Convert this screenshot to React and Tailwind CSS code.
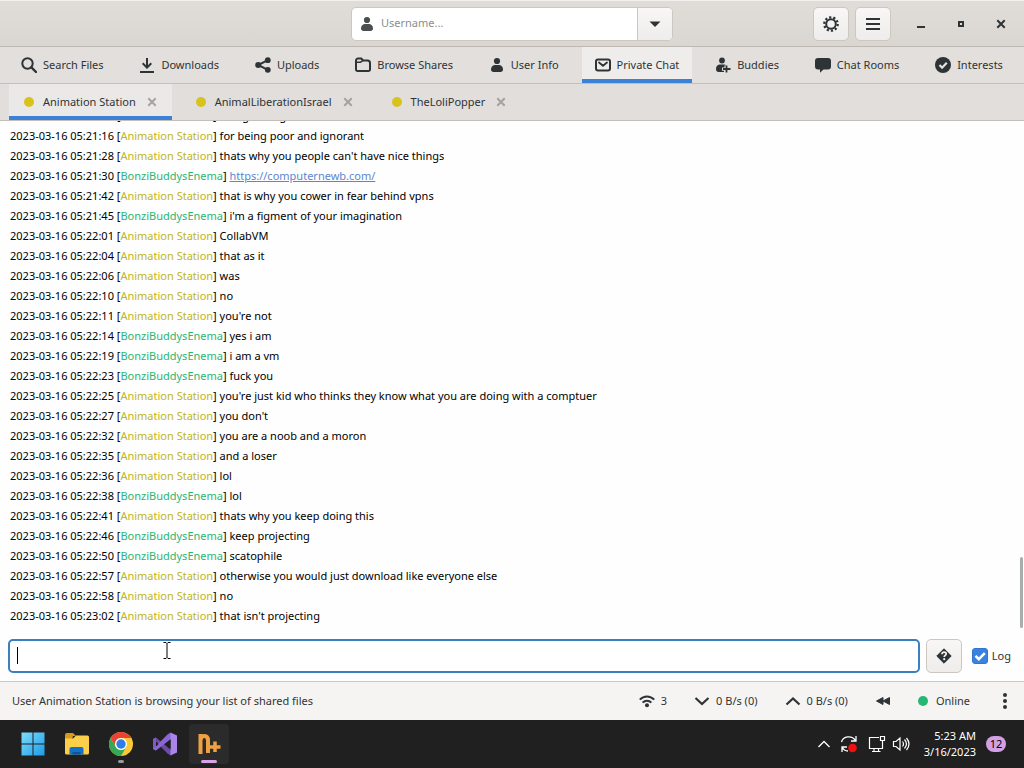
import React, { useState } from 'react';

const icons = {
  search: (
    <>
      <circle cx="6.5" cy="6.5" r="5.2" fill="none" stroke="currentColor" strokeWidth="2" />
      <path d="M10.4 10.4 15 15" stroke="currentColor" strokeWidth="2.4" strokeLinecap="round" />
    </>
  ),
  download: (
    <path d="M7 1h2v7.2l2.6-2.6L13 7l-5 5-5-5 1.4-1.4L7 8.2zM1 14h14v2H1z" fill="currentColor" />
  ),
  share: (
    <>
      <circle cx="3.2" cy="8" r="3" fill="currentColor" />
      <circle cx="12.8" cy="3.2" r="2.9" fill="currentColor" />
      <circle cx="12.8" cy="12.8" r="2.9" fill="currentColor" />
      <path d="M12.8 3.2 3.2 8l9.6 4.8" fill="none" stroke="currentColor" strokeWidth="2" />
    </>
  ),
  folder: (
    <>
      <path d="M1 12.5v-9A2 2 0 0 1 3 1.500h3.300L8 3.500h4.500A2.500 2.500 0 0 1 15 6v6.500a1.500 1.500 0 0 1-1.500 1.500h-11A1.500 1.500 0 0 1 1 12.500z" fill="none" stroke="currentColor" strokeWidth="2" />
      <path d="M1 5.200h4.500L8 3.500" fill="none" stroke="currentColor" strokeWidth="1.500" />
    </>
  ),
  user: (
    <>
      <circle cx="8" cy="4" r="3.100" fill="currentColor" />
      <path d="M2 12.500C2 9.500 4 8 6 8h4c2 0 4 1.500 4 4.500 0 1.500-1 2.500-2.500 2.500h-7C3 15 2 14 2 12.500z" fill="currentColor" />
    </>
  ),
  mail: (
    <>
      <rect x="1" y="2.500" width="14" height="11" rx="2" fill="none" stroke="currentColor" strokeWidth="2" />
      <path d="m4 5.500 4 3.300 4-3.300" fill="none" stroke="currentColor" strokeWidth="1.800" strokeLinecap="round" />
    </>
  ),
  buddy: (
    <>
      <circle cx="7" cy="3.500" r="2.900" fill="currentColor" />
      <path d="M1 12c0-3 1.700-4.500 4-4.500h4c1 0 1.800.3 2.400.8H9.500v2.200H7v3.200h2V15H3.500C2 15 1 14 1 12z" fill="currentColor" />
      <path d="M11.500 8.500v7M8 12h7.500" stroke="currentColor" strokeWidth="1.800" />
    </>
  ),
  chat: (
    <path d="M3 1h10a3 3 0 0 1 3 3v5.500a3 3 0 0 1-3 3H8.500L5 15.800v-3.300H3a3 3 0 0 1-3-3V4a3 3 0 0 1 3-3z" fill="currentColor" />
  ),
  check: (
    <>
      <circle cx="8" cy="8" r="8" fill="currentColor" />
      <path d="m4.500 8 2.600 2.700 4.700-5" fill="none" stroke="#e5e2df" strokeWidth="2.200" />
    </>
  ),
  gear: (
    <>
      <circle cx="8" cy="8" r="4.800" fill="none" stroke="currentColor" strokeWidth="2" />
      <circle cx="8" cy="8" r="6.700" fill="none" stroke="currentColor" strokeWidth="2.300" strokeDasharray="2.200 2.010" />
    </>
  ),
  menu: <path d="M1 3h14M1 8h14M1 13h14" stroke="currentColor" strokeWidth="2" />,
  dropdown: <path d="M2.500 5.500h11L8 11z" fill="currentColor" />,
  minimize: <path d="M4 11h8" stroke="currentColor" strokeWidth="2" />,
  maximize: <rect x="6" y="6" width="4" height="4" fill="none" stroke="currentColor" strokeWidth="2" />,
  close: <path d="m4.300 4.300 7.400 7.400m0-7.400-7.400 7.400" stroke="currentColor" strokeWidth="2" />,
  question: (
    <>
      <path d="M8 .8 15.200 8 8 15.200.8 8z" fill="currentColor" stroke="currentColor" strokeLinejoin="round" />
      <path d="M5.900 6.300c0-3 4.300-2.600 4.300-.3 0 1.400-2 1.500-2 3" fill="none" stroke="#f3f2f1" strokeWidth="1.700" />
      <circle cx="8.200" cy="11.200" r="1.100" fill="#f3f2f1" />
    </>
  ),
  wifi: (
    <>
      <path d="M.8 6.600c4-4.300 10.400-4.300 14.400 0M3.600 9.600c2.500-2.600 6.300-2.600 8.800 0" fill="none" stroke="currentColor" strokeWidth="2" />
      <circle cx="8" cy="12.300" r="2" fill="currentColor" />
    </>
  ),
  down: <path d="m1.500 5 6.500 6 6.500-6" fill="none" stroke="currentColor" strokeWidth="2.200" />,
  up: <path d="m1.500 11.500 6.500-6 6.500 6" fill="none" stroke="currentColor" strokeWidth="2.200" />,
  rewind: <path d="M8 4.500v7L1.500 8zM14.500 4.500v7L8 8z" fill="currentColor" stroke="currentColor" strokeLinejoin="round" />,
  dots: (
    <>
      <circle cx="8" cy="2" r="2" fill="currentColor" />
      <circle cx="8" cy="8" r="2" fill="currentColor" />
      <circle cx="8" cy="14" r="2" fill="currentColor" />
    </>
  ),
};

function Icon({ name, className = '' }) {
  return (
    <svg viewBox="0 0 16 16" aria-hidden className={`w-4 h-4 shrink-0 ${className}`}>
      {icons[name]}
    </svg>
  );
}

const navItems = [
  { id: 'search', label: 'Search Files', icon: 'search' },
  { id: 'downloads', label: 'Downloads', icon: 'download' },
  { id: 'uploads', label: 'Uploads', icon: 'share' },
  { id: 'browse', label: 'Browse Shares', icon: 'folder' },
  { id: 'userinfo', label: 'User Info', icon: 'user' },
  { id: 'private', label: 'Private Chat', icon: 'mail' },
  { id: 'buddies', label: 'Buddies', icon: 'buddy' },
  { id: 'rooms', label: 'Chat Rooms', icon: 'chat' },
  { id: 'interests', label: 'Interests', icon: 'check' },
];

const chats = ['Animation Station', 'AnimalLiberationIsrael', 'TheLoliPopper'];

const A = 'Animation Station';
const B = 'BonziBuddysEnema';

const messages = [
  ['05:21:12', A, 'being boring'],
  ['05:21:16', A, 'for being poor and ignorant'],
  ['05:21:28', A, "thats why you people can't have nice things"],
  ['05:21:30', B, 'https://computernewb.com/'],
  ['05:21:42', A, 'that is why you cower in fear behind vpns'],
  ['05:21:45', B, "i'm a figment of your imagination"],
  ['05:22:01', A, 'CollabVM'],
  ['05:22:04', A, 'that as it'],
  ['05:22:06', A, 'was'],
  ['05:22:10', A, 'no'],
  ['05:22:11', A, "you're not"],
  ['05:22:14', B, 'yes i am'],
  ['05:22:19', B, 'i am a vm'],
  ['05:22:23', B, 'fuck you'],
  ['05:22:25', A, "you're just kid who thinks they know what you are doing with a comptuer"],
  ['05:22:27', A, "you don't"],
  ['05:22:32', A, 'you are a noob and a moron'],
  ['05:22:35', A, 'and a loser'],
  ['05:22:36', A, 'lol'],
  ['05:22:38', B, 'lol'],
  ['05:22:41', A, 'thats why you keep doing this'],
  ['05:22:46', B, 'keep projecting'],
  ['05:22:50', B, 'scatophile'],
  ['05:22:57', A, 'otherwise you would just download like everyone else'],
  ['05:22:58', A, 'no'],
  ['05:23:02', A, "that isn't projecting"],
];

const raised =
  'flex items-center justify-center border border-[#cdc7c2] bg-linear-to-b from-[#f8f7f6] to-[#efedec]';

// blue underline of the selected tab, drawn inside so the label stays centred
const underline = 'shadow-[inset_0_-4px_0_#3b82d6]';

function HeaderBar() {
  return (
    <header className="grid grid-cols-[1fr_auto_1fr] items-center h-[47px] shrink-0 border-t border-b border-t-[#f2f0ee] border-b-[#bfb8b1] bg-linear-to-b from-[#e0dcd8] to-[#dad6d2]">
      <span />
      <div className="flex h-[34px] w-[322px] rounded-[5px] border border-[#cdc7c2] bg-white overflow-hidden">
        <label className="flex flex-1 items-center gap-1.5 pl-[7px]">
          <Icon name="user" className="text-[#4b4f50]" />
          <input
            aria-label="Username"
            placeholder="Username..."
            className="min-w-0 flex-1 bg-transparent outline-none placeholder:text-[#8b8e8f]"
          />
        </label>
        <button
          type="button"
          aria-label="Show users"
          className="flex w-[35px] items-center justify-center border-l border-[#cdc7c2] bg-linear-to-b from-[#f8f7f6] to-[#efedec]"
        >
          <Icon name="dropdown" />
        </button>
      </div>
      <div className="flex items-center justify-end pr-[11px]">
        <button type="button" aria-label="Preferences" className={`${raised} h-[34px] w-9 rounded-[5px]`}>
          <Icon name="gear" />
        </button>
        <button type="button" aria-label="Menu" className={`${raised} ml-1.5 mr-[18px] h-[34px] w-9 rounded-[5px]`}>
          <Icon name="menu" />
        </button>
        <div className="flex gap-4">
          {['minimize', 'maximize', 'close'].map((name) => (
            <button key={name} type="button" aria-label={name} className="flex h-6 w-6 items-center justify-center">
              <Icon name={name} />
            </button>
          ))}
        </div>
      </div>
    </header>
  );
}

function MainTabs({ active, onSelect }) {
  return (
    <nav aria-label="Pages" className="flex h-[37px] shrink-0 justify-between border-b border-[#c4bfba] bg-[#e2dfdc] px-2">
      {navItems.map((item) => (
        <button
          key={item.id}
          type="button"
          onClick={() => onSelect(item.id)}
          className={`flex items-center gap-1.5 px-[13px] ${
            active === item.id ? `bg-[#efedec] ${underline}` : ''
          }`}
        >
          <Icon name={item.icon} />
          {item.label}
        </button>
      ))}
    </nav>
  );
}

function ChatTabs({ active, onSelect }) {
  return (
    <div className="flex h-[37px] shrink-0 gap-[9px] border-b border-[#c4bfba] bg-[#e1dedb] px-[9px]">
      {chats.map((chat) => (
        <div
          key={chat}
          className={`flex items-center gap-2 pl-[15px] pr-3 ${
            active === chat ? `bg-[#ebe9e7] ${underline}` : ''
          }`}
        >
          <button type="button" onClick={() => onSelect(chat)} className="flex items-center gap-[9px]">
            <span className="h-2.5 w-2.5 rounded-full bg-[#d8c31c]" />
            {chat}
          </button>
          <button type="button" aria-label={`Close ${chat}`} className="text-[#a5a29f]">
            <Icon name="close" />
          </button>
        </div>
      ))}
    </div>
  );
}

function ChatLog() {
  return (
    <div className="relative flex min-h-0 flex-1 flex-col justify-end overflow-hidden pb-[13px] pl-2.5 text-black">
      {messages.map(([time, user, text]) => (
        <p key={time} className="h-5 shrink-0 whitespace-pre leading-5">
          2023-03-16 {time} [
          <span className={user === A ? 'text-[#c0b520]' : 'text-[#2bb673]'}>{user}</span>]{' '}
          {text.startsWith('https') ? (
            <a href={text} className="text-[#5b86d0] underline">{text}</a>
          ) : (
            text
          )}
        </p>
      ))}
      <div aria-hidden className="absolute bottom-[11px] right-px h-[71px] w-[3px] rounded-full bg-[#aaadad]" />
    </div>
  );
}

function MessageEntry() {
  const [log, setLog] = useState(true);
  return (
    <div className="flex shrink-0 items-center pb-2 pl-2 pr-[13px]">
      <div className="relative flex-1">
        <input
          aria-label="Message"
          className="block h-[34px] w-full rounded-[5px] border-2 border-[#3a7fbf] bg-white px-2 outline-none"
        />
        <span aria-hidden className="absolute left-[9px] top-2 h-[17px] w-px bg-black" />
        <svg aria-hidden viewBox="0 0 8 17" className="absolute left-[155px] top-[3px] h-[17px] w-2">
          <path d="M.500.500h2.500l1 1 1-1h2.500M4 1.500v14M.500 16.500h2.500l1-1 1 1h2.500" fill="none" stroke="#000" />
        </svg>
      </div>
      <button type="button" aria-label="Help" className={`${raised} ml-1.5 h-[34px] w-9 rounded-[5px]`}>
        <Icon name="question" />
      </button>
      <label className="ml-2.5 flex items-center gap-1">
        <span className="relative flex h-4 w-4">
          <input
            type="checkbox"
            checked={log}
            onChange={(e) => setLog(e.target.checked)}
            className="h-4 w-4 appearance-none rounded-[3px] border border-[#2f76cf] checked:bg-[#3a82e0]"
          />
          {log && (
            <svg aria-hidden viewBox="0 0 16 16" className="pointer-events-none absolute inset-0">
              <path d="m3.500 7.800 3.300 3.300 6-6" fill="none" stroke="#fff" strokeWidth="2.600" />
            </svg>
          )}
        </span>
        Log
      </label>
    </div>
  );
}

function StatusBar() {
  return (
    <footer className="flex h-[39px] shrink-0 items-center justify-between border-t border-[#cdc9c0] bg-[#f5f4f3] pl-3 pr-[11px]">
      <span>User Animation Station is browsing your list of shared files</span>
      <div className="flex items-center gap-[27px]">
        <span className="flex items-center gap-1.5"><Icon name="wifi" />3</span>
        <button type="button" className="flex items-center gap-1.5"><Icon name="down" />0 B/s (0)</button>
        <button type="button" className="flex items-center gap-1.5"><Icon name="up" />0 B/s (0)</button>
        <button type="button" aria-label="Alternative speed limits"><Icon name="rewind" /></button>
        <button type="button" className="flex items-center gap-2">
          <span className="h-2.5 w-2.5 rounded-full bg-[#26b872]" />
          Online
        </button>
        <button type="button" aria-label="More"><Icon name="dots" /></button>
      </div>
    </footer>
  );
}

function WindowsLogo() {
  return (
    <svg viewBox="0 0 24 24" className="h-6 w-6">
      <defs>
        <linearGradient id="win" x1="0" y1="0" x2="1" y2="1" gradientUnits="objectBoundingBox">
          <stop offset="0" stopColor="#7fdcfb" />
          <stop offset="1" stopColor="#1c9be8" />
        </linearGradient>
      </defs>
      <path d="M.500.500h11v11H.500zM12.500.500h11v11h-11zM.500 12.500h11v11H.500zM12.500 12.500h11v11h-11z" fill="url(#win)" />
    </svg>
  );
}

function FolderLogo() {
  return (
    <svg viewBox="0 0 24 24" className="h-6 w-6">
      <path d="M0 3q0-2 2-2h6l3 3h-3l-1 4H0z" fill="#d79a1b" />
      <path d="M0 6.500h8L11 3.500h11.500Q24 3.500 24 5v16q0 1.500-1.500 1.500h-21Q0 22.500 0 21z" fill="#fbcf4a" />
      <path d="M4.500 22.500V17q0-2 2-2h10q2 0 2 2v5.500z" fill="#1371c6" />
      <path d="M7.500 22.500V20h8v2.500z" fill="#0d5596" />
    </svg>
  );
}

function ChromeLogo() {
  return (
    <svg viewBox="0 0 24 24" className="h-6 w-6">
      <circle cx="12" cy="12" r="12" fill="#fcc934" />
      <path d="M1.600 6A12 12 0 0 1 22.400 6H12a6 6 0 0 0-5.200 9z" fill="#ea4335" />
      <path d="M1.600 6A12 12 0 0 0 12 24l5.200-9A6 6 0 0 1 6.800 15z" fill="#34a853" />
      <circle cx="12" cy="12" r="6" fill="#fff" />
      <circle cx="12" cy="12" r="4.700" fill="#2f7de8" />
    </svg>
  );
}

function VisualStudioLogo() {
  return (
    <svg viewBox="0 0 24 24" className="h-6 w-6">
      <path d="M0 7 3 5.500 18 18v5.500L15 22z" fill="#6b4ba8" />
      <path d="M0 7 3 5.500v13L0 17z" fill="#7d5bc0" />
      <path d="M3 18.500 0 17 15 2l3-1.500V7z" fill="#8a65d6" />
      <path d="M17.500.500 24 3.500v17l-6.500 3z" fill="#a985ea" />
      <path d="m3 9.500 2.500 2.500L3 14.500zM17.500 7.500v9L12 12z" fill="#202020" />
    </svg>
  );
}

function NicotineLogo() {
  return (
    <svg viewBox="0 0 24 24" className="h-6 w-6">
      <path d="M3.500 22V2M11 21V8.500Q11 4 7.500 4T3.500 8" fill="none" stroke="#f0a040" strokeWidth="4" />
      <path d="M18 9.500v10.500M13 15h10.500" stroke="#f0a040" strokeWidth="3.500" />
    </svg>
  );
}

const apps = [
  { name: 'Start', Logo: WindowsLogo },
  { name: 'File Explorer', Logo: FolderLogo },
  { name: 'Chrome', Logo: ChromeLogo, mark: 'w-1.5 bg-[#9a9a9a]' },
  { name: 'Visual Studio', Logo: VisualStudioLogo },
  { name: 'Nicotine+', Logo: NicotineLogo, active: true, mark: 'w-4 bg-[#d8a2e4]' },
];

function Taskbar() {
  return (
    <div className="flex h-12 shrink-0 items-center justify-between bg-[#202020] pl-[13px] pr-[18px] text-white">
      <div className="flex gap-1">
        {apps.map(({ name, Logo, active, mark }) => (
          <button
            key={name}
            type="button"
            aria-label={name}
            className={`relative flex h-10 w-10 items-center justify-center rounded ${active ? 'bg-[#2b2b2b]' : ''}`}
          >
            <Logo />
            {mark && <span className={`absolute bottom-[1px] h-[3px] rounded-full ${mark}`} />}
          </button>
        ))}
      </div>
      <div className="flex items-center">
        <svg viewBox="0 0 12 12" aria-hidden className="mr-2.5 h-3 w-3">
          <path d="m.5 9 5.500-5.500L11.500 9" fill="none" stroke="currentColor" strokeWidth="1.300" />
        </svg>
        <svg viewBox="0 0 18 18" aria-hidden className="mr-2.5 h-[18px] w-[18px]">
          <path d="M1.500 7C3 .800 12 0 15.500 5.500M16 1v5h-5M2 17v-5h5M2 12c1 2 3 4 6 4" fill="none" stroke="currentColor" strokeWidth="1.300" />
          <circle cx="12.500" cy="13" r="4.300" fill="#f40f0f" />
        </svg>
        <svg viewBox="0 0 18 18" aria-hidden className="mr-1.5 h-[18px] w-[18px]">
          <path d="M11 2.500H1.500v11h13V8M6 13.500v3M10.500 13.500v3M4 16.500h8.500M12.500 1.500h4v4h-4zM14.500 5.500V8" fill="none" stroke="currentColor" strokeWidth="1.200" />
        </svg>
        <svg viewBox="0 0 18 18" aria-hidden className="mr-3.5 h-[18px] w-[18px]">
          <path d="M1.500 6.500v5H4l4 3.500V3L4 6.500zM10.500 6.500q2 2.500 0 5M12.500 4.500q4 4.500 0 9M14.500 3q5 6 0 12" fill="none" stroke="currentColor" strokeWidth="1.200" />
        </svg>
        <div className="text-right leading-4">
          <div>5:23 AM</div>
          <div>3/16/2023</div>
        </div>
        <span className="ml-2.5 flex h-4 w-5 items-center justify-center rounded-full bg-[#d3a0e3] text-black">12</span>
      </div>
    </div>
  );
}

export default function App() {
  const [page, setPage] = useState('private');
  const [chat, setChat] = useState(A);

  return (
    <div className="flex h-screen flex-col bg-[#fefefe] font-['Noto_Sans','Open_Sans',sans-serif] text-[11px] text-[#2e3436]">
      <HeaderBar />
      <MainTabs active={page} onSelect={setPage} />
      <ChatTabs active={chat} onSelect={setChat} />
      <ChatLog />
      <MessageEntry />
      <StatusBar />
      <Taskbar />
    </div>
  );
}
